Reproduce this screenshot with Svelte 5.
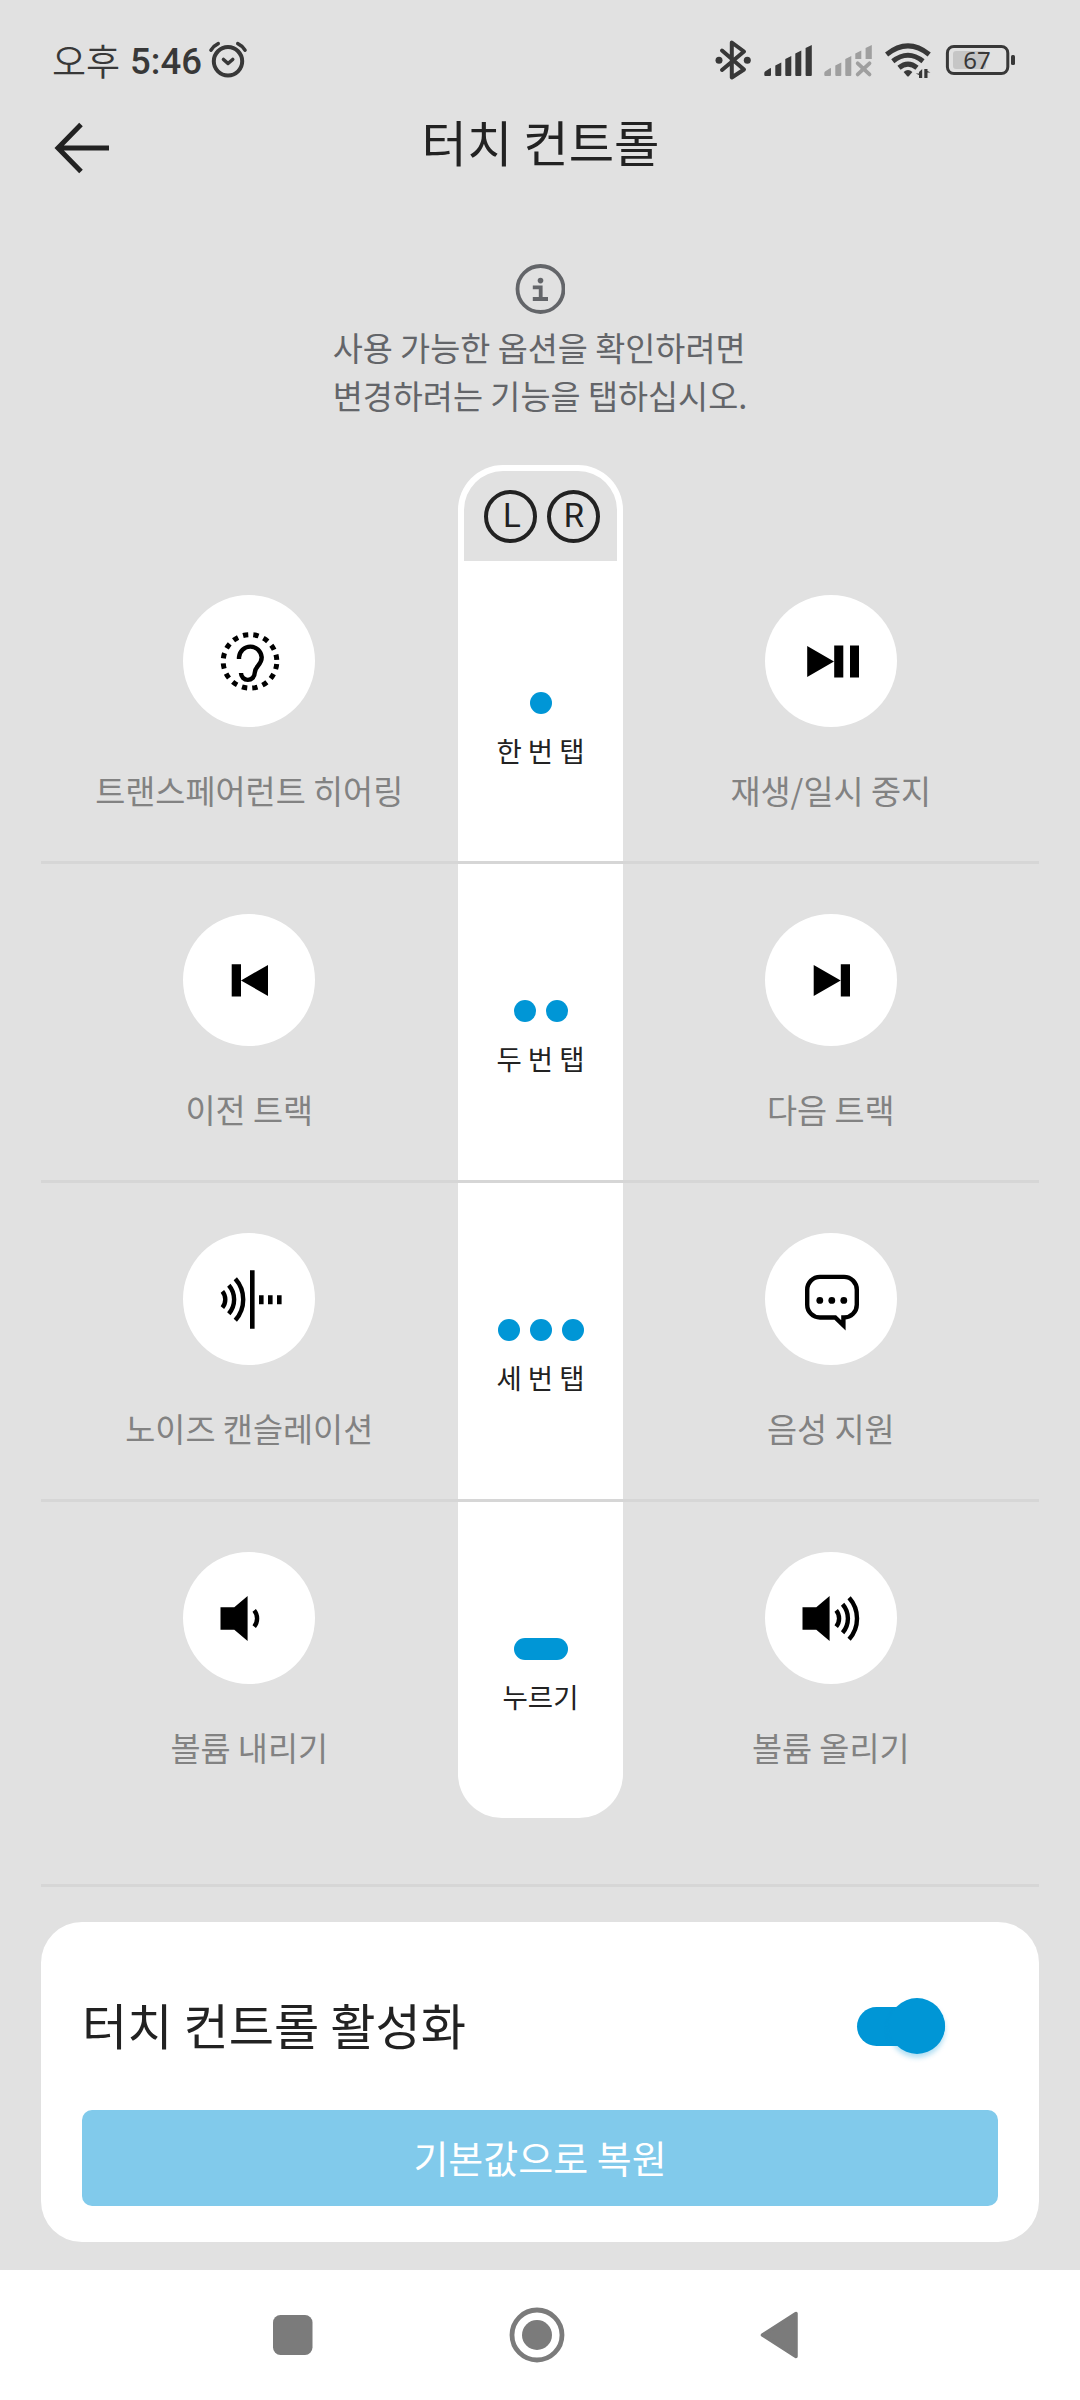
<script>
  let enabled = $state(true);

  const rows = [
    { tap: '한 번 탭', dots: 1, left: { icon: 'ear', label: '트랜스페어런트 히어링' }, right: { icon: 'play', label: '재생/일시 중지' } },
    { tap: '두 번 탭', dots: 2, left: { icon: 'prev', label: '이전 트랙' }, right: { icon: 'next', label: '다음 트랙' } },
    { tap: '세 번 탭', dots: 3, left: { icon: 'noise', label: '노이즈 캔슬레이션' }, right: { icon: 'voice', label: '음성 지원' } },
    { tap: '누르기', dots: 0, left: { icon: 'down', label: '볼륨 내리기' }, right: { icon: 'up', label: '볼륨 올리기' } },
  ];
</script>

{#snippet waves(count)}
  <g fill="none" stroke="#000" stroke-width="4.4">
    <path d="M39.4 58.4A12.8 12.8 0 0 1 39.4 74.6" />
    {#if count > 1}
      <path d="M45.8 52.2A21.9 21.9 0 0 1 45.8 80.8" />
      <path d="M52.3 45.7A31.3 31.3 0 0 1 52.3 87.3" />
    {/if}
  </g>
{/snippet}

{#snippet action(item)}
  <div class="action">
    <button type="button" class="round" aria-label={item.label}>
      <svg width="132" height="132" viewBox="0 0 132 132">
        {#if item.icon === 'ear'}
          <circle cx="67" cy="66.4" r="26.8" fill="none" stroke="#000" stroke-width="5" stroke-dasharray="5.3 5.225" stroke-dashoffset="-2.6" />
          <path d="M56 64V62.3A11.4 11.8 0 0 1 78.7 62.3C78.7 70.5 71.7 70.8 71.7 78A6.8 6.8 0 0 1 58 78" fill="none" stroke="#000" stroke-width="4.4" />
        {:else if item.icon === 'play'}
          <path d="M42.2 51L69 66.5L42.2 82zM69.2 50.6h9.1v32h-9.1zM85 50.6h9v32h-9z" />
        {:else if item.icon === 'prev'}
          <path d="M48.7 50.3h9.3v32.2h-9.3zM85 51v31L58 66.4z" />
        {:else if item.icon === 'next'}
          <path d="M48.7 51v31L75.7 66.4zM75.8 50.3h9.2v32.2h-9.2z" />
        {:else if item.icon === 'noise'}
          {@render waves(3)}
          <path d="M67 37.3h4.6v58.4h-4.6zM76 62.3h4.6v9h-4.6zM85 62.3h4.6v9h-4.6zM94 62.3h4.6v9h-4.6z" />
        {:else if item.icon === 'voice'}
          <path d="M55 43.9H79A12.8 12.8 0 0 1 91.8 56.7V71.7A12.8 12.8 0 0 1 79 84.5H78.4V92.4L70.2 84.5H55A12.8 12.8 0 0 1 42.2 71.7V56.7A12.8 12.8 0 0 1 55 43.9z" fill="none" stroke="#000" stroke-width="4.4" />
          <circle cx="54.8" cy="67.4" r="3.4" />
          <circle cx="66.8" cy="67.4" r="3.4" />
          <circle cx="78.8" cy="67.4" r="3.4" />
        {:else}
          <path d="M37.5 55.2H51.3L64.6 44V89L51.3 77.7H37.5z" />
          <g transform="translate(31.8 0)">{@render waves(item.icon === 'up' ? 3 : 1)}</g>
        {/if}
      </svg>
    </button>
    <span class="label">{item.label}</span>
  </div>
{/snippet}

<div class="screen">
  <div class="status">
    <span class="ampm">오후</span>
    <span class="time">5:46</span>
    <svg class="alarm" width="40" height="40" viewBox="0 0 40 40" fill="none" stroke="#383838" stroke-linecap="round" stroke-linejoin="round">
      <circle cx="20" cy="21.3" r="14.2" stroke-width="4" />
      <path d="M15.5 19.5L20 23.5L24.7 19.5" stroke-width="3.6" />
      <path d="M3 10.2Q5.5 5.8 10.2 3.6M37 10.2Q34.5 5.8 29.8 3.6" stroke-width="3.6" />
    </svg>
    <div class="system">
      <svg width="304" height="44" viewBox="712 38 304 44" fill="#383838">
        <path d="M722 50.5L744 69.5L731.8 77.5V42.5L744 51.5L722 70" fill="none" stroke="#383838" stroke-width="4" stroke-linejoin="round" stroke-linecap="round" />
        <circle cx="719" cy="60.3" r="3.5" />
        <circle cx="747.3" cy="60.3" r="3.5" />
        <path d="M765 71.5L770 68.2Q771 67.8 771 69V75Q771 76 770 76H765.4Q764.3 76 764.3 75V73Q764.3 72 765 71.5zM775.3 65.5L781.3 62.5V75Q781.3 76 780.3 76H776.3Q775.3 76 775.3 75zM785.3 59L791.3 56V75Q791.3 76 790.3 76H786.3Q785.3 76 785.3 75zM795.3 53.5L801.3 50.5V75Q801.3 76 800.3 76H796.3Q795.3 76 795.3 75zM805.6 48L811.8 45V75Q811.8 76 810.8 76H806.6Q805.6 76 805.6 75z" />
        <g fill="#9f9f9f">
          <path d="M825 71.5L830 68.2Q831 67.8 831 69V75Q831 76 830 76H825.4Q824.3 76 824.3 75V73Q824.3 72 825 71.5zM835.3 65.5L841.3 62.5V75Q841.3 76 840.3 76H836.3Q835.3 76 835.3 75zM845.3 59L851.3 56V75Q851.3 76 850.3 76H846.3Q845.3 76 845.3 75zM855.3 53.5L861.3 50.5V59H855.3zM865.6 48L871.8 45V59H865.6z" />
          <path d="M857.7 63.3L869.5 74.4M869.5 63.3L857.7 74.4" stroke="#9f9f9f" stroke-width="3.8" stroke-linecap="round" />
        </g>
        <g fill="none" stroke="#383838" stroke-width="5">
          <path d="M886.6 54.5Q908 37.3 929.2 54.5" />
          <path d="M892.8 61.3Q908 49.2 923 61.3" />
          <path d="M899 67.8Q908 60.5 917 67.8" />
        </g>
        <path d="M903.6 72Q908 68.2 912.4 72L909 76Q908 77 907 76z" />
        <path d="M922.2 69V78H919V75L915.8 73.6H919V72zM924.3 78V69H927.5V71L930.5 72.6H927.5V78z" />
        <rect x="953" y="51" width="33" height="18" rx="3" fill="#c6c6c6" />
        <rect x="947.4" y="46.4" width="60.4" height="27.2" rx="6.5" fill="none" stroke="#383838" stroke-width="3" />
        <rect x="1011" y="55" width="4" height="10" rx="1.5" />
        <text x="977" y="69" text-anchor="middle" class="battery">67</text>
      </svg>
    </div>
  </div>

  <header>
    <button type="button" class="back" aria-label="뒤로">
      <svg width="56" height="52" viewBox="0 0 56 52" fill="none" stroke="#222" stroke-width="5">
        <path d="M27 2.5L4 26L27 49.5M5 26H55" />
      </svg>
    </button>
    <h1>터치 컨트롤</h1>
    <span class="spacer"></span>
  </header>

  <div class="hint">
    <svg width="50" height="50" viewBox="0 0 50 50">
      <circle cx="25.5" cy="25" r="23" fill="none" stroke="#636569" stroke-width="3.8" />
      <circle cx="25.5" cy="16.6" r="2.8" fill="#636569" />
      <path d="M17.8 23.3H25.7V35M17.8 35H33" fill="none" stroke="#636569" stroke-width="3.8" />
    </svg>
    <p>사용 가능한 옵션을 확인하려면<br />변경하려는 기능을 탭하십시오.</p>
  </div>

  <main>
    <div class="ears">
      <div class="ears-inner">
        <span class="ear">L</span>
        <span class="ear">R</span>
      </div>
    </div>
    {#each rows as row (row.tap)}
      <div class="row">
        {@render action(row.left)}
        <div class="tap">
          <div class="dots">
            {#each { length: row.dots } as _}
              <i class="dot"></i>
            {:else}
              <i class="dot press"></i>
            {/each}
          </div>
          <span class="tap-label">{row.tap}</span>
        </div>
        {@render action(row.right)}
      </div>
    {/each}
  </main>

  <section class="card">
    <div class="toggle-row">
      <span class="toggle-label">터치 컨트롤 활성화</span>
      <button type="button" class="switch" class:off={!enabled} role="switch" aria-checked={enabled} aria-label="터치 컨트롤 활성화" onclick={() => (enabled = !enabled)}>
        <span class="thumb"></span>
      </button>
    </div>
    <button type="button" class="reset">기본값으로 복원</button>
  </section>

  <nav>
    <svg width="40" height="40" viewBox="0 0 40 40"><rect width="39.5" height="40" rx="7.5" fill="#7b7b7b" /></svg>
    <svg width="56" height="56" viewBox="0 0 56 56">
      <circle cx="28" cy="28" r="25" fill="none" stroke="#7b7b7b" stroke-width="4.8" />
      <circle cx="28" cy="28" r="15" fill="#7b7b7b" />
    </svg>
    <svg width="39" height="48" viewBox="0 0 39 48"><path d="M36 2.5V45.5L2.5 24z" fill="#7b7b7b" stroke="#7b7b7b" stroke-width="3.5" stroke-linejoin="round" /></svg>
  </nav>
</div>

<style>
  :global(body) { margin: 0; background: #e1e1e1; }

  .screen {
    display: flex;
    flex-direction: column;
    width: 1080px;
    height: 2400px;
    overflow: hidden;
    background: #e1e1e1;
    color: #222;
    font-family: "Noto Sans CJK KR", sans-serif;
  }
  button { padding: 0; border: 0; background: none; font: inherit; cursor: pointer; }
  svg { display: block; flex-shrink: 0; }

  .status { display: flex; align-items: center; height: 80px; padding: 20px 64px 0 52px; color: #383838; }
  .ampm { font-size: 37px; font-weight: 350; line-height: 44px; }
  .time { margin: 3px 0 0 10px; font: 500 36.5px/44px Roboto, sans-serif; }
  .alarm { margin-left: 6px; }
  .system { margin-left: auto; }
  .battery { font: 400 24px "Noto Sans", Roboto, sans-serif; }

  header { display: flex; align-items: center; justify-content: space-between; height: 90px; padding: 0 54px; }
  .back { margin-top: 5px; }
  h1 { margin: -8px 0 0 1px; font-size: 49.3px; font-weight: 400; line-height: 60px; }
  .spacer { width: 56px; }

  .hint { display: flex; flex-direction: column; align-items: center; height: 201px; padding-top: 74px; color: #636569; }
  .hint p { margin: 9px 0 0; font-size: 32.7px; line-height: 48px; }

  main { display: flex; flex-direction: column; margin: 0 41px; padding-bottom: 66px; border-bottom: 3px solid #d6d6d6; }
  .ears { align-self: center; box-sizing: border-box; width: 165px; height: 96px; padding: 6px 6px 0; border-radius: 45px 45px 0 0; background: #fff; }
  .ears-inner { display: flex; justify-content: center; gap: 10px; box-sizing: border-box; height: 90px; padding: 19px 0 0 3px; border-radius: 39px 39px 0 0; background: #e1e1e1; }
  .ear { box-sizing: border-box; width: 53px; height: 53px; padding-left: 2px; border: 4px solid #222; border-radius: 50%; font: 400 33px/44px Roboto, sans-serif; text-align: center; }
  .ear:first-child { padding-left: 4px; }

  .row { display: grid; grid-template-columns: 1fr 165px 1fr; height: 316px; border-bottom: 3px solid #d6d6d6; }
  .row:last-child { border-bottom: 0; }
  .action { display: flex; flex-direction: column; align-items: center; padding-top: 50px; }
  .round { width: 132px; height: 132px; border-radius: 50%; background: #fff; }
  .label { margin-top: 39px; color: #828282; font-size: 32.7px; line-height: 48px; white-space: nowrap; }
  .tap { display: flex; flex-direction: column; align-items: center; box-sizing: border-box; padding: 136px 0 0 1px; background: #fff; }
  .dots { display: flex; gap: 10px; }
  .dot { width: 22px; height: 22px; border-radius: 11px; background: #0096d6; }
  .dot.press { width: 54px; }
  .tap-label { margin-top: 16px; font-size: 27.5px; line-height: 40px; }

  .ears + .row { height: 300px; }
  .ears + .row .action { padding-top: 34px; }
  .ears + .row .tap { padding-top: 131px; }
  .row:last-child .tap { border-radius: 0 0 44px 44px; }

  .card { box-sizing: border-box; height: 320px; margin: 35px 41px 0; padding: 60px 41px 0; border-radius: 41px; background: #fff; }
  .toggle-row { display: flex; align-items: center; justify-content: space-between; height: 88px; padding-right: 53px; }
  .toggle-label { margin-top: -4px; font-size: 49.2px; line-height: 60px; }
  .switch { display: flex; align-items: center; justify-content: flex-end; width: 88px; height: 39px; border-radius: 20px; background: #0096d6; }
  .switch.off { justify-content: flex-start; opacity: 0.5; }
  .thumb { width: 56px; height: 56px; flex-shrink: 0; border-radius: 50%; background: #0096d6; box-shadow: 0 4px 5px rgba(0, 150, 214, 0.3); }
  .reset { display: block; box-sizing: border-box; width: 100%; height: 96px; margin-top: 40px; padding-bottom: 3px; border-radius: 10px; background: #81caeb; color: #fff; font-size: 38px; line-height: 56px; }

  nav { display: flex; align-items: center; flex: 1; gap: 195.5px; margin-top: 28px; padding-left: 273px; background: #fff; }
</style>
